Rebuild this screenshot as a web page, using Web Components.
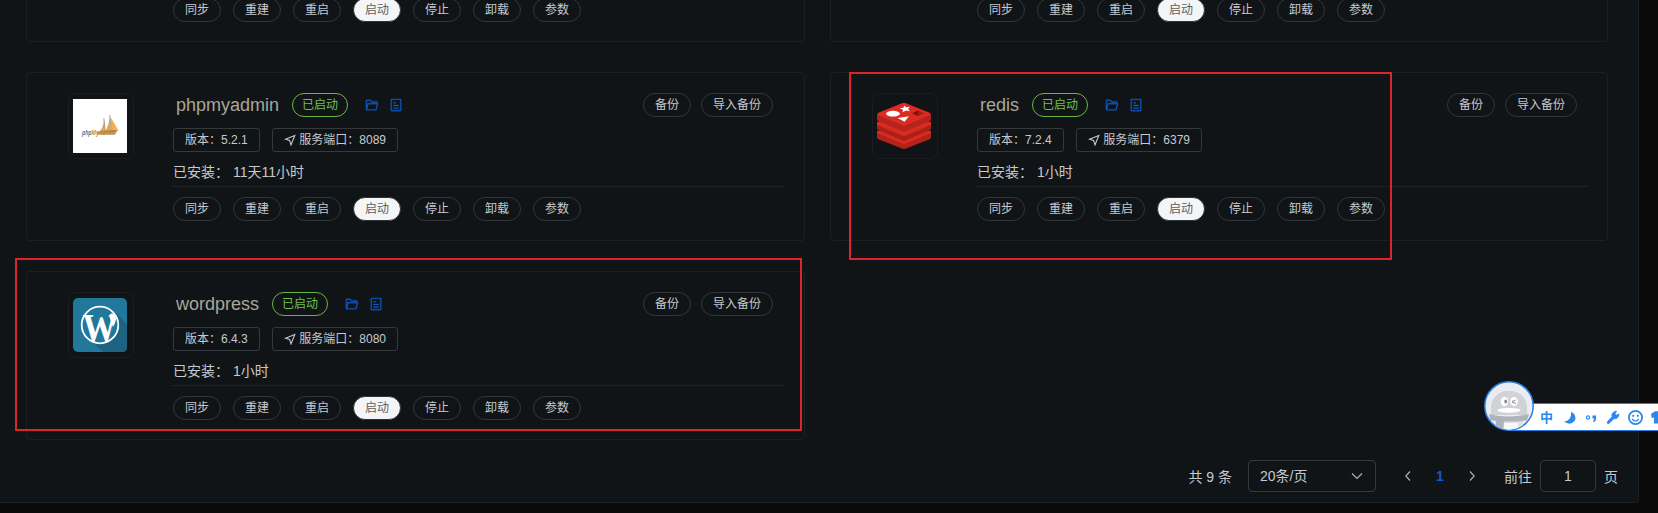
<!DOCTYPE html>
<html lang="zh-CN">
<head>
<meta charset="utf-8">
<title>已安装应用</title>
<style>
  html, body { margin: 0; height: 513px; overflow: hidden; background: #0a0a0a; }
  body { font-family: "Liberation Sans", "Noto Sans CJK SC", sans-serif; color: #c6cacf; position: relative; }
</style>
</head>
<body>

<app-panel>
  <app-card class="cut" nohead></app-card>
  <app-card class="cut" nohead></app-card>
  <app-card name="phpmyadmin" version="5.2.1" port="8089" time="11天11小时">
    <app-logo slot="logo" kind="pma"></app-logo>
  </app-card>
  <app-card name="redis" version="7.2.4" port="6379" time="1小时">
    <app-logo slot="logo" kind="redis"></app-logo>
  </app-card>
  <app-card name="wordpress" version="6.4.3" port="8080" time="1小时">
    <app-logo slot="logo" kind="wp"></app-logo>
  </app-card>
  <page-nav slot="footer" total="9" size="20" page="1"></page-nav>
</app-panel>

<mark-box style="left:849px;top:72px;width:543px;height:188px"></mark-box>
<mark-box style="left:15px;top:258px;width:787px;height:173px"></mark-box>
<ime-bar></ime-bar>

<script>
// attach an open shadow root and fill it
function shadow(el, html){
  let template = document.createElement('template');
  template.innerHTML = html;
  el.attachShadow({ mode: 'open' }).appendChild(template.content.cloneNode(true));
}

class AppPanel extends HTMLElement{
  connectedCallback(){
    shadow(this, `
      <style>
        :host{ display: block; box-sizing: border-box; width: 1639px; height: 503px; overflow: hidden;
          background: #111417; border-right: 1px solid #1e2124; border-bottom: 1px solid #1e2124;
          border-bottom-right-radius: 4px; }
        .cards{ display: grid; grid-template-columns: 779px 778px; grid-template-rows: 50px 169px 169px;
          column-gap: 25px; row-gap: 30px; margin: -8px 0 0 26px; }
        .footer{ display: flex; justify-content: flex-end; padding: 20px 20px 0 0; }
      </style>
      <div class="cards"><slot></slot></div>
      <div class="footer"><slot name="footer"></slot></div>
    `);
  }
}

class RoundButton extends HTMLElement{
  connectedCallback(){
    shadow(this, `
      <style>
        :host{ display: block; box-sizing: border-box; height: 24px; padding: 0 11px; border: 1px solid #34373a;
          border-radius: 12px; font-size: 12px; line-height: 23px; white-space: nowrap; }
        :host([white]){ background: #f4f5f6; border-color: #303336; color: #5c5f63; }
        :host([green]){ border-color: #67b844; color: #6cc24a; padding: 0 9px; }
      </style>
      <slot></slot>
    `);
  }
}

class InfoTag extends HTMLElement{
  connectedCallback(){
    shadow(this, `
      <style>
        :host{ display: flex; align-items: center; box-sizing: border-box; height: 24px; padding: 0 11px;
          border: 1px solid #36393c; border-radius: 3px; font-size: 12px; line-height: 22px; white-space: nowrap; }
      </style>
      <slot name="icon"></slot><span><slot></slot></span>
    `);
  }
}

class AppLogo extends HTMLElement{
  connectedCallback(){
    let logos = {
      pma: `
        <rect width="54" height="54" fill="#fff"/>
        <path d="M31 19C31 25 29 30 26.5 33L32 31.5Z" fill="#dfa653"/>
        <path d="M36.6 16.5C36.5 23 34.5 29 32 32.5L38 31.5Z" fill="#eda437"/>
        <path d="M37.5 18C40 22 43 27 44.5 30L38.4 31Z" fill="#f2b04b"/>
        <path d="M30.8 19L32.4 33M36.8 16L38.3 32" stroke="#77777f" stroke-width=".6" fill="none"/>
        <path d="M24 32.8Q36 30.5 45.5 30.2L42 35.5H24Z" fill="#cf9d4c"/>
        <path d="M30 33.2L43 31.4" stroke="#776f72" stroke-width=".8"/>
        <text x="9" y="36" font-size="6.5" font-weight="bold" font-style="italic" textLength="33" lengthAdjust="spacingAndGlyphs"
          font-family="Liberation Sans, sans-serif" fill="#b98a4b"><tspan fill="#6d6c86">php</tspan>MyAdmin</text>`,
      redis: `
        <path d="M0 32L27 42L54 32V38.5Q54 39.6 52 40.5L29 49.5Q27 50.4 25 49.5L2 40.5Q0 39.6 0 38.5Z" fill="#b3231a"/>
        <path d="M0 32L27 26L54 32V34L29 44.5Q27 45.4 25 44.5L0 34Z" fill="#d92b22"/>
        <path d="M0 24L27 34L54 24V29.5Q54 30.6 52 31.5L29 41Q27 42 25 41L2 31.5Q0 30.6 0 29.5Z" fill="#a82016"/>
        <path d="M0 23L27 16L54 23V26L29 36.5Q27 37.4 25 36.5L0 26Z" fill="#d92b22"/>
        <path d="M0 15L27 26.5L54 15V20.5Q54 21.6 52 22.5L29 32Q27 33 25 32L2 22.5Q0 21.6 0 20.5Z" fill="#b5241a"/>
        <path d="M2 13.4L25 4.3Q27 3.3 29 4.3L52 13.4Q55 15 52 16.4L29 26.2Q27 27.2 25 26.2L2 16.4Q-1 15 2 13.4Z" fill="#dc2b22"/>
        <ellipse cx="16" cy="14.7" rx="7" ry="2.9" fill="#fff"/>
        <path d="M27.3 6.5L29 8.3L33 8L31 10L33 12.2L29 11.4L25.6 13.2L26 10.7L22.5 9.3L26.4 8.7Z" fill="#fff"/>
        <path d="M20.5 19L32 17.2L27.5 22.8Z" fill="#fff"/>
        <path d="M35 14.2L41 11.5V17Z" fill="#7c130b"/><path d="M41 11.5L47 14.2L41 17Z" fill="#a71b10"/>`,
      wp: `
        <rect width="54" height="54" rx="5" fill="#22789b"/>
        <path d="M42 14L54 26V49Q54 54 49 54H30L14 39Z" fill="#1c6382"/>
        <circle cx="27" cy="27" r="18.3" fill="#22789b" stroke="#fff" stroke-width="1.8"/>
        <text x="26.5" y="42.5" font-size="39" font-weight="bold" text-anchor="middle" textLength="34" lengthAdjust="spacingAndGlyphs"
          font-family="Liberation Serif, serif" fill="#fff">W</text>
        <path d="M38 15.5Q43 15.5 43 21Q42.5 25 40 29L37.5 22Q35.5 17 38 15.5Z" fill="#fff"/>`
    };
    shadow(this, `
      <style>:host, svg{ display: block; width: 54px; height: 54px; }</style>
      <svg viewBox="0 0 54 54">${logos[this.getAttribute('kind')]}</svg>
    `);
  }
}

class AppCard extends HTMLElement{
  connectedCallback(){
    let attr = name => this.getAttribute(name);
    let buttons = ['同步', '重建', '重启', '启动', '停止', '卸载', '参数'].map(function(text){
      return `<round-button ${text === '启动' ? 'white' : ''}>${text}</round-button>`;
    }).join('');

    let head = this.hasAttribute('nohead') ? '' : `
      <div class="head">
        <span class="name">${attr('name')}</span>
        <round-button green>已启动</round-button>
        <span class="links">
          <svg viewBox="0 0 1024 1024"><path d="M878.08 448H241.92l-96 384h636.16l96-384zM832 384v-64H485.76L357.504 192H128v448l57.92-231.744A32 32 0 0 1 216.96 384H832zm-24.96 512H96a32 32 0 0 1-32-32V160a32 32 0 0 1 32-32h287.872l128.384 128H864a32 32 0 0 1 32 32v96h23.04a32 32 0 0 1 31.04 39.744l-112 448A32 32 0 0 1 807.04 896z"/></svg>
          <svg viewBox="0 0 1024 1024"><path d="M192 128v768h640V128H192zm-32-64h704a32 32 0 0 1 32 32v832a32 32 0 0 1-32 32H160a32 32 0 0 1-32-32V96a32 32 0 0 1 32-32zm160 640h384v64H320v-64zm0-192h384v64H320v-64zm0-192h192v64H320v-64z"/></svg>
        </span>
        <span class="backup">
          <round-button>备份</round-button>
          <round-button>导入备份</round-button>
        </span>
      </div>
      <div class="tags">
        <info-tag>版本：${attr('version')}</info-tag>
        <info-tag>
          <svg slot="icon" class="plane" viewBox="0 0 12 12"><path d="M10.8 1.5L1.4 5.2L5.6 6.4L7 10.9Z" fill="none" stroke="currentColor" stroke-width="1.1"/></svg>服务端口：${attr('port')}</info-tag>
      </div>
      <div class="time"><span>已安装：</span><span>${attr('time')}</span></div>
      <div class="line"></div>`;

    shadow(this, `
      <style>
        :host{ display: flex; box-sizing: border-box; border: 1px solid #1c2023; border-radius: 4px; }
        .logo{ flex: none; box-sizing: border-box; width: 66px; height: 66px; margin: 20px 0 0 41px; padding: 5px 4px;
          border: 1px solid #1a1e21; border-radius: 8px; }
        :host([nohead]) .logo{ visibility: hidden; }
        .body{ width: 612px; margin-left: 38px; padding-bottom: 19px; display: flex; flex-direction: column; justify-content: flex-end; }
        .head{ display: flex; align-items: center; height: 24px; margin-left: 4px; }
        .name{ font-size: 18px; line-height: 24px; color: #aaa698; margin-right: 13px; }
        .links{ display: flex; gap: 10px; margin-left: 17px; }
        .links svg{ width: 14px; height: 14px; fill: #0f5ac8; stroke: #0f5ac8; stroke-width: 24; }
        .backup{ display: flex; gap: 10px; margin: 0 11px 0 auto; }
        .tags{ display: flex; gap: 12px; margin: 11px 0 0 1px; }
        .plane{ width: 12px; height: 12px; margin-right: 3.6px; }
        .time{ display: flex; gap: 4px; height: 34px; line-height: 40px; font-size: 14px; margin-left: 1px; }
        .line{ height: 1px; background: #1e2225; }
        .buttons{ display: flex; gap: 12px; margin: 10px 0 0 1px; }
      </style>
      <div class="logo"><slot name="logo"></slot></div>
      <div class="body">${head}<div class="buttons">${buttons}</div></div>
    `);
  }
}

class PageNav extends HTMLElement{
  connectedCallback(){
    shadow(this, `
      <style>
        :host{ display: flex; align-items: center; height: 32px; font-size: 14px; line-height: 32px; }
        span{ white-space: nowrap; }
        .text{ padding-top: 2px; }
        .select, .input{ box-sizing: border-box; height: 32px; border: 1px solid #36393c; border-radius: 4px; line-height: 30px; }
        .select{ display: flex; align-items: center; justify-content: space-between; width: 128px; padding: 0 11px; margin: 0 16px 0 16px; }
        .input{ width: 56px; text-align: center; margin: 0 8px; }
        .item{ width: 32px; display: flex; justify-content: center; }
        .current{ color: #1458d0; font-weight: bold; }
        .jump{ margin-left: 16px; }
        svg{ fill: none; stroke: #b0b3b8; stroke-width: 1.1; }
      </style>
      <span class="text">共 ${this.getAttribute('total')} 条</span>
      <div class="select"><span>${this.getAttribute('size')}条/页</span>
        <svg width="14" height="14" viewBox="0 0 14 14"><path d="M2 4.5L7 9.5L12 4.5"/></svg></div>
      <div class="item"><svg width="12" height="12" viewBox="0 0 12 12"><path d="M8 1.5L3.8 6L8 10.5"/></svg></div>
      <div class="item current">${this.getAttribute('page')}</div>
      <div class="item"><svg width="12" height="12" viewBox="0 0 12 12"><path d="M4 1.5L8.2 6L4 10.5"/></svg></div>
      <span class="text jump">前往</span>
      <div class="input">${this.getAttribute('page')}</div>
      <span class="text">页</span>
    `);
  }
}

// red frame lying over the cards
class MarkBox extends HTMLElement{
  connectedCallback(){
    shadow(this, `<style>:host{ position: absolute; box-sizing: border-box; border: 2px solid #d8262c; }</style>`);
  }
}

// input method toolbar floating at the right edge
class ImeBar extends HTMLElement{
  connectedCallback(){
    shadow(this, `
      <style>
        :host{ position: absolute; left: 1484px; top: 381px; width: 174px; height: 50px; overflow: hidden; }
        .bar{ box-sizing: border-box; display: flex; align-items: center; width: 190px; height: 28px; margin: 22px 0 0 25px;
          padding-left: 30px; background: #fff; border: 1px solid #2a80e4; }
        .bar b{ flex: none; width: 13px; font-size: 13px; line-height: 26px; padding-top: 1px; height: 26px; text-align: center; color: #2a87ee; }
        .bar svg{ flex: none; }
        .face{ position: absolute; left: 0; top: 0; }
      </style>
      <div class="bar">
        <b>中</b>
        <svg width="106" height="26" viewBox="0 0 106 26" fill="#2a87ee">
          <path d="M18.3 7.5Q24.5 12 21.5 17Q17 22 11 17.5Q18.5 17 18.3 7.5Z"/>
          <circle cx="35" cy="13.5" r="1.6" fill="none" stroke="#2a87ee" stroke-width="1.2"/>
          <path d="M39.5 11.5H43V15Q43 17.5 40.2 18V16.7Q41.3 16 41.3 14.5H39.5Z"/>
          <path d="M54.3 17.8L59 13Q58 8 63.5 7L62 9.8L63.3 11.2L66 10Q65.5 15.3 60.7 14.7L56 19.5Q54 20.3 54.3 17.8Z" stroke="#2a87ee" stroke-width=".8"/>
          <circle cx="82.5" cy="13.5" r="6.6" fill="none" stroke="#2a87ee" stroke-width="1.8"/>
          <circle cx="80.2" cy="11.8" r="1.1"/><circle cx="84.8" cy="11.8" r="1.1"/>
          <path d="M79.2 15Q82.5 19.3 85.8 15" fill="none" stroke="#2a87ee" stroke-width="1.3"/>
          <path d="M98 10L102 7.3H106V19.5H101V13.5L98.8 14Z"/>
        </svg>
      </div>
      <svg class="face" width="50" height="50" viewBox="0 0 50 50">
        <defs><clipPath id="disc"><circle cx="25" cy="25" r="23.6"/></clipPath></defs>
        <circle cx="25" cy="25" r="24.2" fill="#e9ecf1" stroke="#2a80e4" stroke-width="1.5"/>
        <g clip-path="url(#disc)">
          <path d="M7 34V27C7 4 43 4 43 27V34Z" fill="#d0d2d5"/>
          <path d="M11 39H39V50H11Z" fill="#dfe1e4"/>
          <path d="M5 33Q25 38 45 33L43 39Q36 41 28 40.5L20 40.5L19 50H12V40L6 39Z" fill="#afb4bc"/>
          <path d="M20 42H34V50H20Z" fill="#f7f8fa"/>
          <ellipse cx="25" cy="29.3" rx="11.5" ry="2.4" fill="#fff"/>
          <ellipse cx="20.5" cy="20.5" rx="3.8" ry="4.5" fill="#fff"/><ellipse cx="30" cy="20.5" rx="3.8" ry="4.5" fill="#fff"/>
          <ellipse cx="21.7" cy="20.5" rx="1.4" ry="2" fill="#85888e"/>
          <path d="M28 20.5L31.5 19M28 21L32 22.5" stroke="#85888e" stroke-width="1" fill="none"/>
        </g>
      </svg>
    `);
  }
}

window.customElements.define("round-button", RoundButton);
window.customElements.define("info-tag", InfoTag);
window.customElements.define("app-logo", AppLogo);
window.customElements.define("app-card", AppCard);
window.customElements.define("page-nav", PageNav);
window.customElements.define("app-panel", AppPanel);
window.customElements.define("mark-box", MarkBox);
window.customElements.define("ime-bar", ImeBar);
</script>
</body>
</html>
